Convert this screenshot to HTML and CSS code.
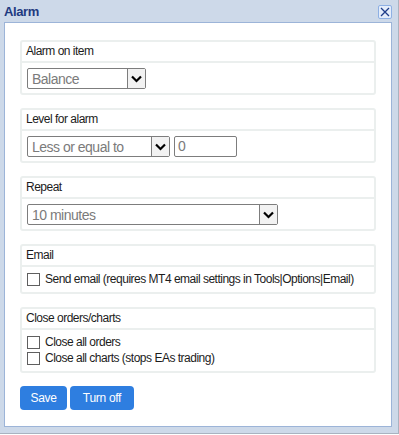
FILE: index.html
```html
<!DOCTYPE html>
<html lang="en">

<head>
    <meta charset="UTF-8">
    <title>Alarm</title>
    <link rel="stylesheet" href="styles.css">
</head>

<body>
    <div class="dialog">
        <div class="titlebar">
            <span class="title">Alarm</span>
            <span class="close-btn">
                <svg width="10" height="10" viewBox="0 0 10 10">
                    <path d="M1 1 L9 9 M9 1 L1 9" stroke="#1f3d8a" stroke-width="1.3" />
                </svg>
            </span>
        </div>

        <div class="panel">
            <div class="group">
                <div class="group-head">Alarm on item</div>
                <div class="group-body">
                    <div class="select sel-item">
                        <span class="value">Balance</span>
                        <span class="arrow"></span>
                    </div>
                </div>
            </div>

            <div class="group">
                <div class="group-head">Level for alarm</div>
                <div class="group-body row">
                    <div class="select sel-level">
                        <span class="value">Less or equal to</span>
                        <span class="arrow"></span>
                    </div>
                    <div class="text-input">0</div>
                </div>
            </div>

            <div class="group">
                <div class="group-head">Repeat</div>
                <div class="group-body">
                    <div class="select sel-repeat">
                        <span class="value">10 minutes</span>
                        <span class="arrow"></span>
                    </div>
                </div>
            </div>

            <div class="group">
                <div class="group-head">Email</div>
                <div class="group-body checks">
                    <label class="check"><span class="box"></span>Send email (requires MT4 email settings in Tools|Options|Email)</label>
                </div>
            </div>

            <div class="group">
                <div class="group-head">Close orders/charts</div>
                <div class="group-body checks">
                    <label class="check"><span class="box"></span>Close all orders</label>
                    <label class="check"><span class="box"></span>Close all charts (stops EAs trading)</label>
                </div>
            </div>

            <div class="actions">
                <button class="btn">Save</button>
                <button class="btn btn-wide">Turn off</button>
            </div>
        </div>
    </div>
</body>

</html>
```

FILE: styles.css
```css
body {
    margin: 0;
    font-family: "Liberation Sans", Arial, sans-serif;
    background: #ffffff;
}

.dialog {
    width: 398px;
    height: 433px;
    background: #cdd9e9;
    border-right: 1px solid #a9b3c0;
    border-bottom: 1px solid #a9b3c0;
}

.titlebar {
    height: 22px;
    display: flex;
    align-items: center;
    justify-content: space-between;
    padding: 0 6px 0 4px;
}

.title {
    font-size: 13px;
    font-weight: bold;
    color: #1f3a80;
    letter-spacing: -0.4px;
}

.close-btn {
    width: 12px;
    height: 12px;
    margin-top: 1px;
    border: 1px solid #8eb0e4;
    border-radius: 2px;
    background: #e4edfb;
    display: flex;
    align-items: center;
    justify-content: center;
}

.panel {
    margin: 0 6px 0 4px;
    height: 386px;
    background: #ffffff;
    border: 1px solid #9cb4d8;
    padding: 17px 15px 0 15px;
}

.group {
    border: 2px solid #ebefee;
    border-radius: 3px;
    margin-bottom: 13px;
}

.group-head {
    height: 19px;
    line-height: 19px;
    padding-left: 4px;
    font-size: 12px;
    letter-spacing: -0.5px;
    color: #1c1c1c;
    border-bottom: 2px solid #ebefee;
}

.group-body {
    padding: 5px 5px 4px;
}

.row {
    display: flex;
    gap: 4px;
}

.select {
    height: 19px;
    border: 1px solid #7d7d7d;
    border-radius: 2px;
    display: flex;
    align-items: center;
}

.select .value {
    flex: 1;
    padding-left: 4px;
    font-size: 14px;
    letter-spacing: -0.5px;
    color: #7b7b7b;
}

.select .arrow {
    width: 17px;
    height: 19px;
    border-left: 1px solid #7d7d7d;
    background: #f2f2f2 url("data:image/svg+xml,%3Csvg xmlns='http://www.w3.org/2000/svg' width='11' height='8'%3E%3Cpath d='M1 1.5 L5.5 6 L10 1.5' fill='none' stroke='%23000' stroke-width='2.2'/%3E%3C/svg%3E") no-repeat center;
}

.sel-item {
    width: 117px;
}

.sel-level {
    width: 141px;
}

.sel-repeat {
    width: 249px;
}

.text-input {
    width: 58px;
    height: 19px;
    line-height: 19px;
    border: 1px solid #7d7d7d;
    border-radius: 2px;
    padding-left: 3px;
    font-size: 14px;
    color: #7b7b7b;
}

.checks {
    padding: 5px 5px 6px;
    display: flex;
    flex-direction: column;
    gap: 2px;
}

.check {
    display: flex;
    align-items: center;
    font-size: 12px;
    letter-spacing: -0.5px;
    white-space: nowrap;
    color: #1c1c1c;
    line-height: 14px;
}

.box {
    width: 11px;
    height: 11px;
    border: 1px solid #5f5f5f;
    background: #ffffff;
    margin-right: 5px;
    flex-shrink: 0;
}

.actions {
    display: flex;
    gap: 3px;
}

.btn {
    height: 24px;
    width: 47px;
    border: none;
    border-radius: 4px;
    background: #2e7ee0;
    color: #ffffff;
    font-family: "Liberation Sans", Arial, sans-serif;
    font-size: 12px;
    letter-spacing: -0.3px;
    padding: 0;
}

.btn-wide {
    width: 64px;
}
```
